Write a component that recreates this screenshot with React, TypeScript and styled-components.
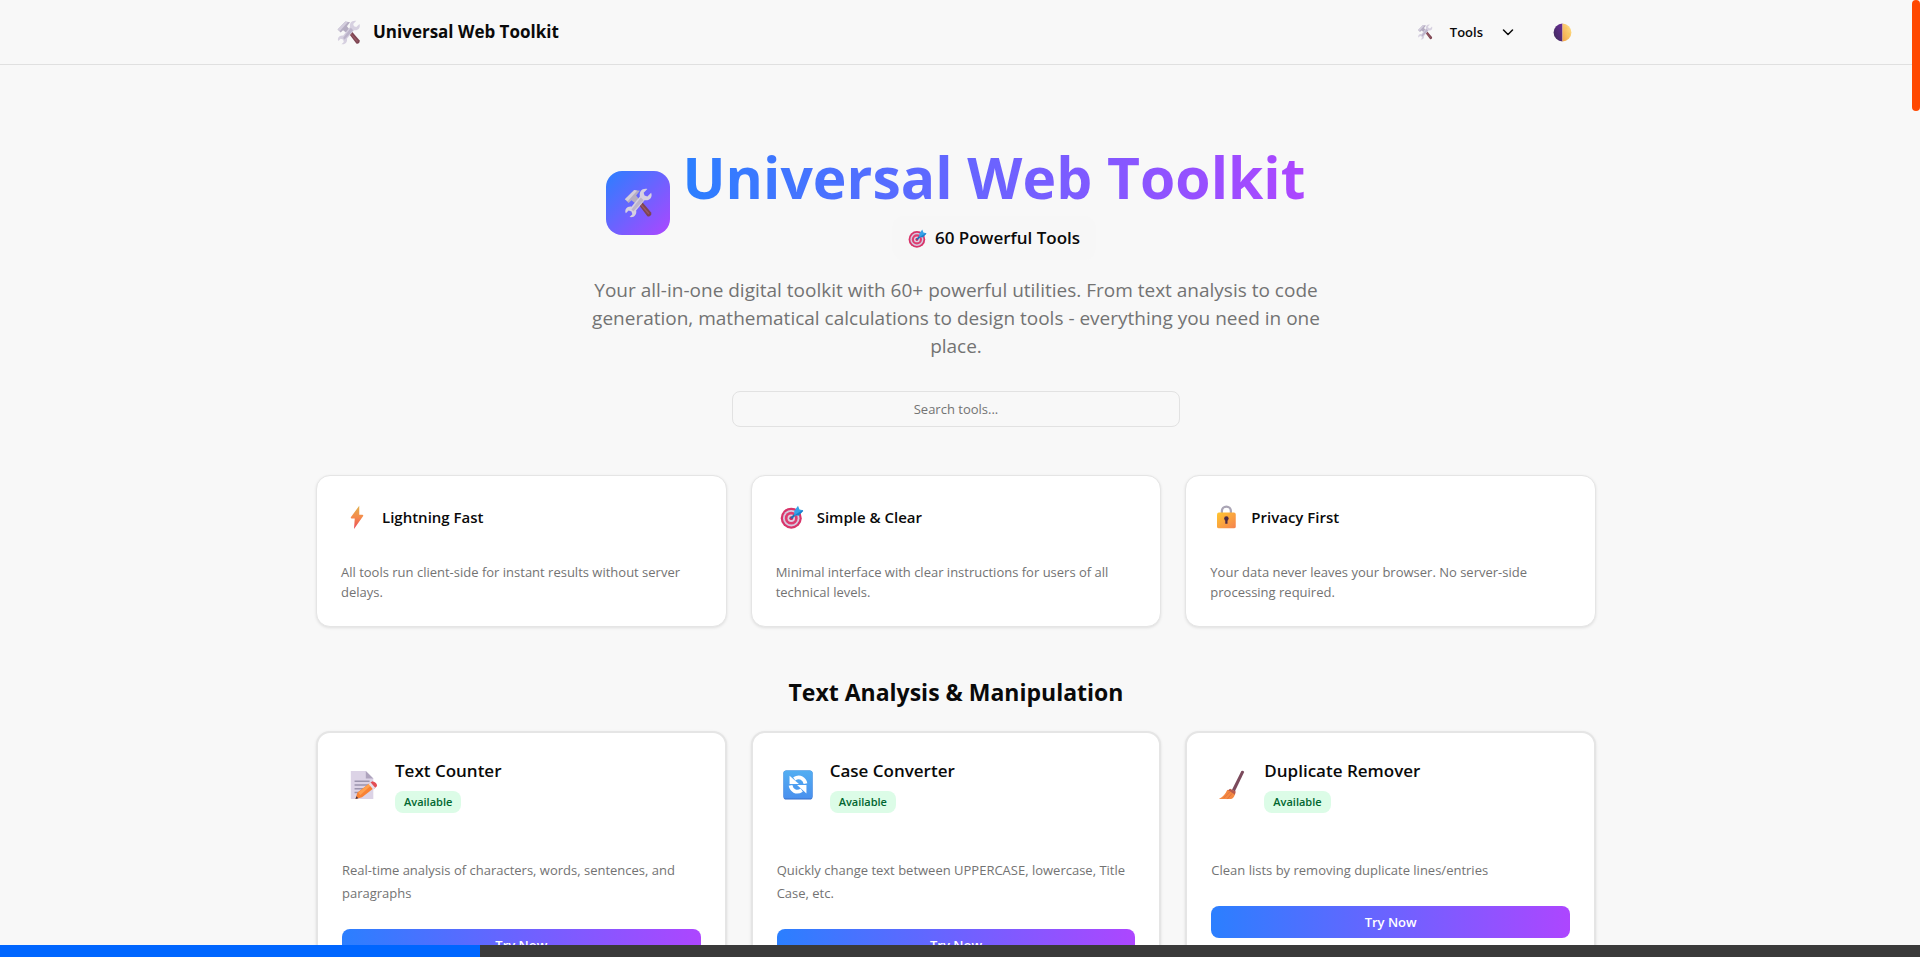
import React from 'react';
import styled, { createGlobalStyle } from 'styled-components';

const Global = createGlobalStyle`
  *, *::before, *::after { box-sizing: border-box; }
  html { scrollbar-width: none; }
  body {
    margin: 0;
    background: #f8f8f8;
    color: #0a0a0a;
    font-family: 'Open Sans', 'Noto Sans', sans-serif;
    font-size: 13px;
    line-height: 20px;
  }
  h1, h2, h3, p { margin: 0; }
  button, input { font: inherit; color: inherit; }
  svg { display: block; flex: none; }
`;

const Page = styled.div`
  padding-right: 8px;
`;

const Header = styled.header`
  border-bottom: 1px solid #e0e0e0;
`;

const HeaderInner = styled.div`
  display: flex;
  align-items: center;
  justify-content: space-between;
  max-width: 1280px;
  height: 64px;
  margin: 0 auto;
  padding: 0 16px;
`;

const Brand = styled.a`
  display: flex;
  align-items: center;
  gap: 12px;
  padding-left: 4px;
  color: inherit;
  font-size: 17px;
  font-weight: 700;
  line-height: 28px;
  text-decoration: none;
`;

const HeaderActions = styled.nav`
  display: flex;
  align-items: center;
  gap: 16px;
`;

const MenuButton = styled.button`
  display: flex;
  align-items: center;
  gap: 17px;
  height: 36px;
  padding: 0 12px;
  border: 0;
  background: none;
  font-weight: 600;
`;

const ThemeButton = styled.button`
  display: grid;
  place-items: center;
  width: 36px;
  height: 36px;
  padding: 0;
  border: 0;
  background: none;
`;

const Main = styled.main`
  max-width: 1280px;
  margin: 0 auto;
  padding: 80px 0;
`;

const Hero = styled.section`
  display: flex;
  flex-direction: column;
  align-items: center;
  text-align: center;
`;

const HeroTop = styled.div`
  display: flex;
  align-items: center;
  gap: 12px;
`;

const HeroIcon = styled.div`
  display: grid;
  place-items: center;
  width: 64px;
  height: 64px;
  border-radius: 16px;
  background: linear-gradient(135deg, #2b7fff, #ad46ff);
`;

const HeroHeading = styled.div`
  display: flex;
  flex-direction: column;
  align-items: center;
  gap: 7px;
`;

const HeroTitle = styled.h1`
  font-size: 57px;
  font-weight: 700;
  line-height: 64px;
  color: transparent;
  background: linear-gradient(90deg, #2b7fff, #ad46ff);
  background-clip: text;
  -webkit-background-clip: text;
`;

const ToolCount = styled.div`
  display: flex;
  align-items: center;
  gap: 8px;
  padding: 8px 16px;
  border-radius: 12px;
  background: #f7f7f7;
  font-size: 17px;
  font-weight: 600;
  line-height: 28px;
`;

const Lead = styled.p`
  max-width: 768px;
  margin-top: 16px;
  color: #737373;
  font-size: 19px;
  line-height: 28px;
`;

const Search = styled.input`
  width: 100%;
  max-width: 448px;
  height: 36px;
  margin-top: 31px;
  border: 1px solid #e2e2e2;
  border-radius: 8px;
  background: transparent;
  text-align: center;
  &::placeholder { color: #737373; opacity: 1; }
`;

const CardGrid = styled.div`
  display: grid;
  grid-template-columns: repeat(3, 1fr);
  align-items: start;
  gap: 24px;
`;

const Features = styled(CardGrid)`
  margin-top: 48px;
`;

const Card = styled.article<{ $thick?: boolean }>`
  padding: 24px;
  border: ${p => (p.$thick ? 2 : 1)}px solid #e5e5e5;
  border-radius: 14px;
  background: #fff;
  box-shadow: 0 1px 3px rgba(0, 0, 0, 0.1);
`;

const FeatureHead = styled.div`
  display: flex;
  align-items: center;
  gap: 13px;
  height: 34px;
  padding-left: 4px;
`;

const FeatureTitle = styled.h3`
  font-size: 15px;
  font-weight: 600;
  line-height: 24px;
`;

const FeatureText = styled.p`
  margin-top: 28px;
  color: #737373;
`;

const SectionTitle = styled.h2`
  margin: 49px 0 23px;
  font-size: 23px;
  font-weight: 700;
  line-height: 32px;
  text-align: center;
`;

const ToolHead = styled.div`
  display: flex;
  align-items: center;
  gap: 17px;
  padding-left: 6px;
`;

const ToolHeading = styled.div`
  display: flex;
  flex-direction: column;
  align-items: flex-start;
  gap: 6px;
`;

const ToolTitle = styled.h3`
  font-size: 17px;
  font-weight: 600;
  line-height: 28px;
`;

const Status = styled.span`
  padding: 2px 9px;
  border-radius: 8px;
  background: #dcfce7;
  color: #016630;
  font-size: 11px;
  font-weight: 600;
  line-height: 18px;
`;

const ToolText = styled.p`
  margin: 46px 0 24px;
  color: #737373;
  line-height: 23px;
`;

const TryButton = styled.button`
  display: block;
  width: 100%;
  height: 32px;
  border: 0;
  border-radius: 8px;
  background: linear-gradient(90deg, #2b7fff, #ad46ff);
  color: #fff;
  font-weight: 600;
`;

const ScrollThumb = styled.div`
  position: fixed;
  top: 0;
  right: 0;
  width: 8px;
  height: 111px;
  border-radius: 4px;
  background: #ff4800;
`;

const ProgressBar = styled.div`
  position: fixed;
  inset: auto 0 0;
  height: 12px;
  background: #3a3a3a;
`;

const ProgressFill = styled.div`
  width: 25%;
  height: 100%;
  background: #0066ff;
`;

type IconProps = { size: number };

const ToolsIcon = ({ size }: IconProps) => (
  <svg width={size} height={size} viewBox="0 0 32 32" aria-hidden="true">
    <path d="M14 14l3-3 13 15a3 3 0 0 1-4 4z" fill="#7d4552" />
    <path d="M16 15l1-1 11 13-1 1z" fill="#9a5a66" />
    <path d="M2 12L12 2l6 1-4 5 4 5-4 4-5-4-3 3z" fill="#b5adc2" />
    <path d="M2 12L12 2l3 1L5 14z" fill="#d3cddd" />
    <path d="M30 5l-4 4-3-1-1-3 4-4c-6-1-9 3-8 8L9 20c-4-1-8 3-6 7l3-3 3 1 1 3-3 3c5 1 8-3 7-7l9-11c5 1 9-3 7-8z" fill="#d6d0e0" />
    <path d="M19 10l3 3-11 12-2-2z" fill="#bcb4ca" />
  </svg>
);

const TargetIcon = ({ size }: IconProps) => (
  <svg width={size} height={size} viewBox="0 0 32 32" aria-hidden="true">
    <circle cx="15" cy="17.5" r="14" fill="#d8346a" />
    <circle cx="15" cy="17.5" r="11" fill="#d5c9de" />
    <circle cx="15" cy="17.5" r="8.500" fill="#df3c70" />
    <circle cx="15" cy="17.5" r="5" fill="#dccfe2" />
    <circle cx="15" cy="17.5" r="2.500" fill="#c9265e" />
    <path d="M14 16.500L22 9l2 2-8 7.500z" fill="#1d6fb5" />
    <path d="M19 8l5-7 2 5 5 1-6 7h-6z" fill="#35a2e8" />
    <path d="M20 13L30 7l1 1-6 6z" fill="#1a7fcb" />
  </svg>
);

const MoonIcon = ({ size }: IconProps) => (
  <svg width={size} height={size} viewBox="0 0 32 32" aria-hidden="true">
    <defs>
      <linearGradient id="moonDark" x1="1" y1="0" x2="0" y2="1">
        <stop offset="0" stopColor="#6a2c9a" />
        <stop offset="1" stopColor="#3c2b55" />
      </linearGradient>
      <linearGradient id="moonLight" x1="1" y1="0" x2="0" y2="1">
        <stop offset="0" stopColor="#ffe48a" />
        <stop offset="1" stopColor="#f3a447" />
      </linearGradient>
    </defs>
    <path d="M16 1a15 15 0 0 0 0 30z" fill="url(#moonDark)" />
    <path d="M16 1a15 15 0 0 1 0 30z" fill="url(#moonLight)" />
    <circle cx="22" cy="9" r="2" fill="#f8c95f" />
    <circle cx="26" cy="19" r="2.500" fill="#f8c95f" />
  </svg>
);

const BoltIcon = ({ size }: IconProps) => (
  <svg width={size} height={size} viewBox="0 0 32 32" aria-hidden="true">
    <defs>
      <linearGradient id="bolt" x1="0" y1="0" x2="0" y2="1">
        <stop offset="0" stopColor="#e0b04c" />
        <stop offset="0.500" stopColor="#f58a4b" />
        <stop offset="1" stopColor="#e9485a" />
      </linearGradient>
    </defs>
    <path d="M19 1L8 16q-1 2 1 2h4l-1 14 12-17q1-2-1-2h-4z" fill="url(#bolt)" />
  </svg>
);

const LockIcon = ({ size }: IconProps) => (
  <svg width={size} height={size} viewBox="0 0 32 32" aria-hidden="true">
    <defs>
      <linearGradient id="lock" x1="0" y1="0" x2="1" y2="1">
        <stop offset="0" stopColor="#ffc62e" />
        <stop offset="1" stopColor="#f58250" />
      </linearGradient>
    </defs>
    <path d="M10.500 13V8a6 6 0 0 1 12 0v5" fill="none" stroke="#aaa5b5" strokeWidth="3" />
    <rect x="4" y="10" width="25" height="21" rx="2.500" fill="url(#lock)" />
    <circle cx="16.500" cy="18" r="3" fill="#4b2a45" />
    <path d="M15 18h3v7h-3z" fill="#4b2a45" />
  </svg>
);

const MemoIcon = ({ size }: IconProps) => (
  <svg width={size} height={size} viewBox="0 0 32 32" aria-hidden="true">
    <path d="M3 1h16l8 8v22H3z" fill="#dcd3e6" />
    <path d="M19 1l8 8h-8z" fill="#aea3bd" />
    <path d="M7 12h16M7 16h16M7 20h11M7 24h7" stroke="#9b94ad" strokeWidth="1.500" />
    <path d="M8 31l2-7 13-10 5 5-13 10z" fill="#f98235" />
    <path d="M11 24l12-10 2 2-12 11z" fill="#ffa04f" />
    <path d="M23 14l3-2q5 1 5 5l-3 3z" fill="#e34d55" />
    <path d="M22 15l2-2 5 6-2 2z" fill="#e6dfeb" />
    <path d="M8 31l1-3 2 2z" fill="#3e3044" />
  </svg>
);

const CycleIcon = ({ size }: IconProps) => (
  <svg width={size} height={size} viewBox="0 0 32 32" aria-hidden="true">
    <defs>
      <linearGradient id="cycle" x1="0" y1="0" x2="0" y2="1">
        <stop offset="0" stopColor="#52aef2" />
        <stop offset="1" stopColor="#4a90ee" />
      </linearGradient>
    </defs>
    <rect x="0.500" y="0.500" width="31" height="31" rx="3" fill="#376fc9" />
    <rect x="0.500" y="0.500" width="31" height="30" rx="3" fill="url(#cycle)" />
    <path d="M12 9.500c6-4 11 0 12 5" fill="none" stroke="#fff" strokeWidth="4" />
    <path d="M7 6v9h10z" fill="#fff" />
    <path d="M20 21.500c-6 4-11 0-12-5" fill="none" stroke="#fff" strokeWidth="4" />
    <path d="M25 25v-9h-10z" fill="#fff" />
  </svg>
);

const BroomIcon = ({ size }: IconProps) => (
  <svg width={size} height={size} viewBox="0 0 32 32" aria-hidden="true">
    <path d="M26 1q2-1 3 1L19 23l-3-2z" fill="#7b4a5c" />
    <path d="M14 20l6 3-1 4-8-5z" fill="#b85a4c" />
    <path d="M11 21l8 5q-1 4-4 5H2q6-3 9-10z" fill="#f58a43" />
    <path d="M7 30l7-7M11 31l5-6" stroke="#e0713f" strokeWidth="1" />
  </svg>
);

const ChevronIcon = () => (
  <svg width="16" height="16" viewBox="0 0 16 16" fill="none" stroke="#0a0a0a" strokeWidth="1.500" strokeLinecap="round" strokeLinejoin="round" aria-hidden="true">
    <path d="M3.500 6L8 10.500 12.500 6" />
  </svg>
);

const features = [
  { Icon: BoltIcon, title: 'Lightning Fast', text: 'All tools run client-side for instant results without server delays.' },
  { Icon: TargetIcon, title: 'Simple & Clear', text: 'Minimal interface with clear instructions for users of all technical levels.' },
  { Icon: LockIcon, title: 'Privacy First', text: 'Your data never leaves your browser. No server-side processing required.' },
];

const tools = [
  { Icon: MemoIcon, title: 'Text Counter', text: 'Real-time analysis of characters, words, sentences, and paragraphs' },
  { Icon: CycleIcon, title: 'Case Converter', text: 'Quickly change text between UPPERCASE, lowercase, Title Case, etc.' },
  { Icon: BroomIcon, title: 'Duplicate Remover', text: 'Clean lists by removing duplicate lines/entries' },
];

export default function App() {
  return (
    <>
      <Global />
      <Page>
        <Header>
          <HeaderInner>
            <Brand href="#">
              <ToolsIcon size={25} />
              Universal Web Toolkit
            </Brand>
            <HeaderActions>
              <MenuButton type="button">
                <ToolsIcon size={16} />
                Tools
                <ChevronIcon />
              </MenuButton>
              <ThemeButton type="button" aria-label="Toggle theme">
                <MoonIcon size={19} />
              </ThemeButton>
            </HeaderActions>
          </HeaderInner>
        </Header>
        <Main>
          <Hero>
            <HeroTop>
              <HeroIcon>
                <ToolsIcon size={30} />
              </HeroIcon>
              <HeroHeading>
                <HeroTitle>Universal Web Toolkit</HeroTitle>
                <ToolCount>
                  <TargetIcon size={19} />
                  60 Powerful Tools
                </ToolCount>
              </HeroHeading>
            </HeroTop>
            <Lead>
              Your all-in-one digital toolkit with 60+ powerful utilities. From text analysis to code generation,
              mathematical calculations to design tools - everything you need in one place.
            </Lead>
            <Search type="text" placeholder="Search tools..." aria-label="Search tools" />
          </Hero>
          <Features>
            {features.map(({ Icon, title, text }) => (
              <Card key={title}>
                <FeatureHead>
                  <Icon size={24} />
                  <FeatureTitle>{title}</FeatureTitle>
                </FeatureHead>
                <FeatureText>{text}</FeatureText>
              </Card>
            ))}
          </Features>
          <SectionTitle>Text Analysis &amp; Manipulation</SectionTitle>
          <CardGrid>
            {tools.map(({ Icon, title, text }) => (
              <Card key={title} $thick>
                <ToolHead>
                  <Icon size={30} />
                  <ToolHeading>
                    <ToolTitle>{title}</ToolTitle>
                    <Status>Available</Status>
                  </ToolHeading>
                </ToolHead>
                <ToolText>{text}</ToolText>
                <TryButton type="button">Try Now</TryButton>
              </Card>
            ))}
          </CardGrid>
        </Main>
      </Page>
      <ScrollThumb />
      <ProgressBar>
        <ProgressFill />
      </ProgressBar>
    </>
  );
}
